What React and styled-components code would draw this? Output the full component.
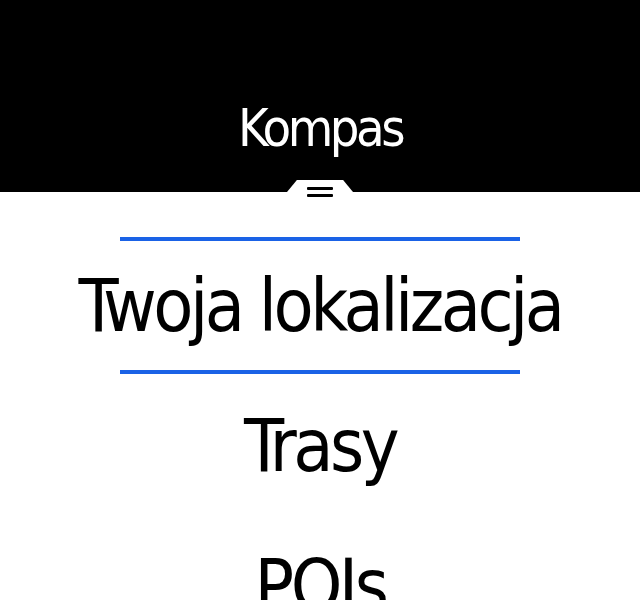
import React from 'react';
import styled, { createGlobalStyle } from 'styled-components';

const GlobalStyle = createGlobalStyle`
  html, body {
    margin: 0;
    padding: 0;
    background: #ffffff;
  }
  body {
    font-family: "DejaVu Sans Condensed", "Liberation Sans", sans-serif;
  }
`

const Screen = styled.div`
  width: 640px;
  height: 600px;
  overflow: hidden;
  background: #ffffff;
  display: flex;
  flex-direction: column;
`

const Header = styled.header`
  position: relative;
  flex-shrink: 0;
  height: 192px;
  box-sizing: border-box;
  padding-top: 64px;
  background: #000000;
  color: #ffffff;
  display: flex;
  align-items: center;
  justify-content: center;
  font-size: 52px;
  line-height: 1;
  letter-spacing: -3.5px;
`

const Handle = styled.div`
  position: absolute;
  left: 50%;
  bottom: -6px;
  width: 66px;
  height: 18px;
  margin-left: -33px;
  display: flex;
  flex-direction: column;
  align-items: center;
  justify-content: flex-start;
  gap: 4px;
  padding-top: 7px;
  box-sizing: border-box;
  background: #ffffff;
  clip-path: polygon(0 67%, 15% 0, 85% 0, 100% 67%, 100% 100%, 0 100%);
`

const HandleBar = styled.span`
  display: block;
  width: 26px;
  height: 3px;
  border-radius: 1px;
  background: #000000;
`

const Menu = styled.ul`
  list-style: none;
  margin: 45px 0 0;
  padding: 0;
  display: flex;
  flex-direction: column;
  gap: 3px;
`

const Item = styled.li`
  flex-shrink: 0;
  height: 137px;
  box-sizing: border-box;
  margin: 0 120px;
  display: flex;
  align-items: center;
  justify-content: center;
  white-space: nowrap;
  color: #000000;
  font-size: 73px;
  line-height: 1;
  letter-spacing: -3.5px;
  border-top: 4px solid ${p => (p.$active ? '#1a62e6' : 'transparent')};
  border-bottom: 4px solid ${p => (p.$active ? '#1a62e6' : 'transparent')};
`

const items = ['Twoja lokalizacja', 'Trasy', 'POIs'];

const App = () => {
  return (
    <Screen>
      <GlobalStyle />
      <Header>
        Kompas
        <Handle>
          <HandleBar />
          <HandleBar />
        </Handle>
      </Header>
      <Menu>
        {items.map((label, i) => (
          <Item key={label} $active={i === 0}>{label}</Item>
        ))}
      </Menu>
    </Screen>
  );
};

export default App;
